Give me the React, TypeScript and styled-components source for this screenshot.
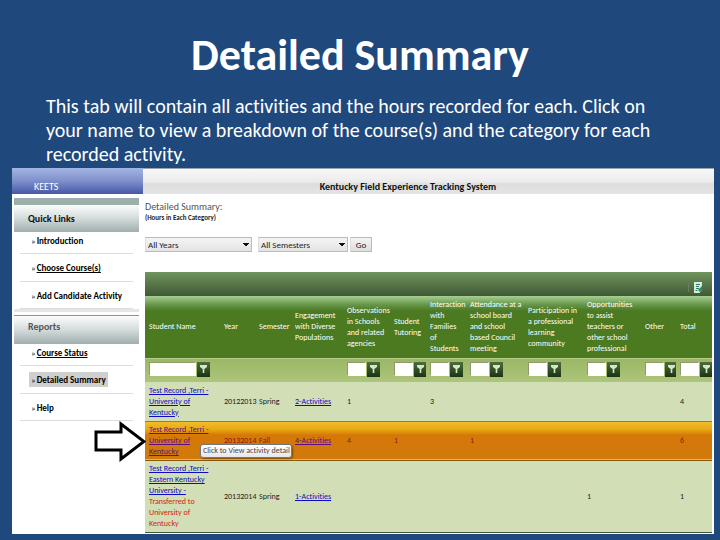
import React from "react";
import styled, { createGlobalStyle, css } from "styled-components";

const GlobalStyle = createGlobalStyle`
  * { box-sizing: border-box; }
  body {
    margin: 0;
    background: #1f497d;
    font-family: Carlito, "Liberation Sans", sans-serif;
    font-variant-ligatures: none;
    font-size: 8px;
    line-height: 11px;
  }
  button, input, select { font: inherit; margin: 0; border-radius: 0; }
`;

const Slide = styled.main`
  padding: 28px 6px 6px 12px;
`;

const Title = styled.h1`
  margin: 0 0 12px;
  padding-right: 6px;
  text-align: center;
  color: #fff;
  font-weight: 700;
  font-size: 44px;
  line-height: 54px;
`;

const Intro = styled.p`
  margin: 0;
  padding: 0 40px 2px 34px;
  color: #fff;
  font-size: 20px;
  line-height: 24px;
`;

const Screen = styled.div`
  display: grid;
  grid-template-columns: 131px 1fr;
  background: #fff;
`;

const Brand = styled.div`
  height: 26px;
  padding: 13px 0 0 22px;
  color: #fff;
  font-size: 10px;
  background: linear-gradient(#a3b5e2, #7f8fcb 50%, #4658a6);
`;

const Banner = styled.header`
  height: 26px;
  padding: 12px 41px 0 0;
  text-align: center;
  font-weight: 700;
  font-size: 10px;
  color: #111;
  border-top: 1px solid #9aa3ad;
  background: linear-gradient(#f8f8f8, #ececec 50%, #dcdedc 60%, #e4e4e4);
`;

const Sidebar = styled.nav`
  padding: 4px 4px 0 2px;
`;

const GroupTitle = styled.h2<{ $muted?: boolean }>`
  margin: 0;
  height: ${(p) => (p.$muted ? 29 : 34)}px;
  padding: ${(p) => (p.$muted ? 5 : 8)}px 0 0 14px;
  border-top: ${(p) => (p.$muted ? "1px solid #8b9392" : "7px solid #9bafad")};
  border-bottom: 1px solid #a5b1b0;
  background: linear-gradient(#fcfdfd, #d5dcdc 50%, #a3b2b1);
  color: ${(p) => (p.$muted ? "#555" : "#111")};
  font-size: 10px;
  line-height: 12px;
`;

const Links = styled.ul<{ $last?: boolean }>`
  list-style: none;
  margin: 0;
  padding: 0 6px;
  ${(p) => !p.$last && css`
    border-bottom: 3px solid #e6e6e6;
    margin-bottom: 3px;
  `}
`;

const LinkItem = styled.li`
  display: flex;
  align-items: center;
  height: 28px;
  padding-left: 9px;
  border-bottom: 1px solid #dcdcdc;
  &:first-child { height: 22px; padding-bottom: 4px; }
  &:last-child { height: 27px; }
`;

const NavLink = styled.a<{ $line?: boolean; $active?: boolean }>`
  display: flex;
  gap: 1px;
  padding: 2px;
  color: #000;
  font-weight: 700;
  font-size: 9px;
  white-space: nowrap;
  text-decoration: none;
  background: ${(p) => (p.$active ? "#cfcfcf" : "none")};
  span { text-decoration: ${(p) => (p.$line ? "underline" : "none")}; }
  &::before { content: "»"; font-weight: 400; }
`;

const Content = styled.section`
  min-width: 0;
  padding: 7px 2px 1px;
`;

const Heading = styled.h2`
  margin: 0;
  color: #555;
  font-weight: 400;
  font-size: 10px;
  line-height: 12px;
`;

const SubHeading = styled.p`
  margin: 0 0 15px;
  font-weight: 700;
  font-size: 7px;
  line-height: 9px;
  color: #222;
`;

const Filters = styled.form`
  display: flex;
  gap: 6px;
  height: 15px;
  margin-bottom: 20px;
`;

const control = css`
  border: 1px solid #bbb;
  border-left-color: #ddd;
  color: #222;
  padding: 0 0 0 2px;
  font-size: 9px;
`;

const Select = styled.select<{ $w: number }>`
  ${control}
  width: ${(p) => p.$w}px;
  appearance: none;
  background: linear-gradient(#111, #111) right 2px top 5px / 6px 1px no-repeat,
    linear-gradient(#111, #111) right 3px top 6px / 4px 1px no-repeat,
    linear-gradient(#111, #111) right 4px top 7px / 2px 1px no-repeat,
    linear-gradient(#f4f4f4, #e4e4e4);
`;

const GoButton = styled.button`
  ${control}
  width: 22px;
  padding: 0;
  margin-left: -4px;
  background: linear-gradient(#f4f4f4, #dedede);
`;

const Toolbar = styled.div`
  display: flex;
  justify-content: flex-end;
  align-items: center;
  gap: 5px;
  height: 24px;
  padding: 6px 10px 0 0;
  background: linear-gradient(#6f955d, #3f5935);
  &::before { content: ""; width: 1px; height: 9px; background: #6b7f60; }
`;

const ExportButton = styled.button`
  display: flex;
  padding: 0;
  border: 0;
  background: none;
`;

const Grid = styled.table`
  width: 100%;
  table-layout: fixed;
  border-collapse: collapse;
  border-bottom: 1px solid #46583c;
`;

const HeadRow = styled.tr`
  height: 62px;
  color: #fff;
  background: linear-gradient(#a6cf92, #66964a 14%, #4b7a22 24%, #4b7a20);
`;

const HeadCell = styled.th`
  padding: 0 0 0 4px;
  text-align: left;
  font-weight: 400;
  white-space: pre;
`;

const FilterRow = styled.tr`
  height: 24px;
  background: linear-gradient(#9bb765, #adc57c);
  border-top: 1px solid #b9cd8c;
`;

const FilterCell = styled.td`
  padding: 0 0 0 4px;
  overflow: hidden;
`;

const FilterBox = styled.div`
  display: flex;
  gap: 1px;
  margin-top: -2px;
`;

const FilterInput = styled.input<{ $wide?: boolean }>`
  flex: none;
  width: ${(p) => (p.$wide ? 47 : 19)}px;
  height: 14px;
  padding: 0 2px;
  border: 1px solid #8d9b6a;
  border-right-color: #fff;
  border-bottom-color: #fff;
  background: #fff;
`;

const FilterButton = styled.button`
  flex: none;
  display: flex;
  align-items: center;
  justify-content: center;
  width: 13px;
  height: 15px;
  padding: 0;
  border: 0;
  background: linear-gradient(#4c7038, #1c3313);
`;

const Row = styled.tr<{ $hot?: boolean; $tall?: boolean }>`
  height: ${(p) => (p.$tall ? 72 : 39)}px;
  color: ${(p) => (p.$hot ? "#8a1a08" : "#222")};
  background: ${(p) =>
    p.$hot
      ? "linear-gradient(#f0bd2b, #e8a813 20%, #d57808 36%, #d07a0b)"
      : "#d2dfb6"};
  ${(p) => p.$hot && css`
    border-top: 1px solid #a07d1c;
    border-bottom: 1px solid #8a5a0c;
  `}
`;

const Cell = styled.td`
  position: relative;
  padding: 0 0 0 4px;
  white-space: pre;
`;

const RecordLink = styled.a<{ $hot?: boolean }>`
  color: ${(p) => (p.$hot ? "#5b0f80" : "#0c0cc4")};
`;

const Transfer = styled.span`
  display: block;
  color: #d01c10;
`;

const Tooltip = styled.div`
  position: absolute;
  z-index: 1;
  left: 55px;
  top: 22px;
  padding: 0 1px 1px 2px;
  border: 1px solid #777;
  border-radius: 3px;
  background: linear-gradient(#fff, #e6e6ee);
  box-shadow: 1px 1px 2px #0006;
  color: #444;
`;

const Pointer = styled.svg`
  position: absolute;
  left: -51px;
  top: -1px;
`;

const Funnel = () => (
  <svg width="7" height="8" viewBox="0 0 7 8" aria-hidden="true">
    <path d="M0 0h7v2L4.300 4v4H2.700V4L0 2z" fill="#d5e6cc" />
  </svg>
);

const columns: [string, number][] = [
  ["Student Name", 75],
  ["Year", 35],
  ["Semester", 36],
  ["Engagement\nwith Diverse\nPopulations", 52],
  ["Observations\nin Schools\nand related\nagencies", 47],
  ["Student\nTutoring", 36],
  ["Interaction\nwith\nFamilies\nof\nStudents", 40],
  ["Attendance at a\nschool board\nand school\nbased Council\nmeeting", 58],
  ["Participation in\na professional\nlearning\ncommunity", 59],
  ["Opportunities\nto assist\nteachers or\nother school\nprofessional", 58],
  ["Other", 35],
  ["Total", 36],
];

const records = [
  {
    name: "Test Record ,Terri -\nUniversity of\nKentucky",
    year: "20122013", term: "Spring", link: "2-Activities",
    hours: ["1", "", "3", "", "", "", "", "4"],
  },
  {
    name: "Test Record ,Terri -\nUniversity of\nKentucky",
    year: "20132014", term: "Fall", link: "4-Activities", hot: true,
    hours: ["4", "1", "", "1", "", "", "", "6"],
  },
  {
    name: "Test Record ,Terri -\nEastern Kentucky\nUniversity -",
    transfer: "Transferred to\nUniversity of\nKentucky",
    year: "20132014", term: "Spring", link: "1-Activities",
    hours: ["", "", "", "", "", "1", "", "1"],
  },
];

export default function App() {
  return (
    <Slide>
      <GlobalStyle />
      <Title>Detailed Summary</Title>
      <Intro>
        This tab will contain all activities and the hours recorded for each. Click on
        your name to view a breakdown of the course(s) and the category for each
        recorded activity.
      </Intro>
      <Screen>
        <Brand>KEETS</Brand>
        <Banner>Kentucky Field Experience Tracking System</Banner>
        <Sidebar>
          <GroupTitle>Quick Links</GroupTitle>
          <Links>
            <LinkItem><NavLink href="#intro"><span>Introduction</span></NavLink></LinkItem>
            <LinkItem><NavLink href="#choose" $line><span>Choose Course(s)</span></NavLink></LinkItem>
            <LinkItem><NavLink href="#add"><span>Add Candidate Activity</span></NavLink></LinkItem>
          </Links>
          <GroupTitle $muted>Reports</GroupTitle>
          <Links $last>
            <LinkItem><NavLink href="#status" $line><span>Course Status</span></NavLink></LinkItem>
            <LinkItem><NavLink href="#summary" $active><span>Detailed Summary</span></NavLink></LinkItem>
            <LinkItem><NavLink href="#help"><span>Help</span></NavLink></LinkItem>
          </Links>
        </Sidebar>
        <Content>
          <Heading>Detailed Summary:</Heading>
          <SubHeading>(Hours in Each Category)</SubHeading>
          <Filters onSubmit={(e) => e.preventDefault()}>
            <Select $w={107} aria-label="Year"><option>All Years</option></Select>
            <Select $w={90} aria-label="Semester"><option>All Semesters</option></Select>
            <GoButton>Go</GoButton>
          </Filters>
          <Toolbar>
            <ExportButton aria-label="Export">
              <svg width="8" height="11" viewBox="0 0 8 11">
                <path d="M0 0h8v8L5.500 11H0z" fill="#d6ece0" />
                <path d="M2 2.500h4M2 4.500h3M2 6.500h3M1.500 8.500h2" stroke="#2f7a6a" />
                <path d="M4 8l4-4v4l-2 2z" fill="#2e8a55" />
              </svg>
            </ExportButton>
          </Toolbar>
          <Grid>
            <colgroup>
              {columns.map(([label, w]) => <col key={label} width={w} />)}
            </colgroup>
            <thead>
              <HeadRow>
                {columns.map(([label]) => <HeadCell key={label} scope="col">{label}</HeadCell>)}
              </HeadRow>
              <FilterRow>
                {columns.map(([label], i) => (
                  <FilterCell key={label}>
                    {(i === 0 || i > 3) && (
                      <FilterBox>
                        <FilterInput $wide={i === 0} aria-label={`Filter ${label}`} />
                        <FilterButton aria-label={`Apply filter ${label}`}><Funnel /></FilterButton>
                      </FilterBox>
                    )}
                  </FilterCell>
                ))}
              </FilterRow>
            </thead>
            <tbody>
              {records.map((r, n) => (
                <Row key={n} $hot={r.hot} $tall={!!r.transfer}>
                  <Cell>
                    <RecordLink href="#record" $hot={r.hot}>{r.name}</RecordLink>
                    {r.transfer && <Transfer>{r.transfer}</Transfer>}
                    {r.hot && (
                      <>
                        <Pointer width="52" height="41" viewBox="0 0 52 41" aria-hidden="true">
                          <path d="M2 11h25V3l23 17.500L27 38V29H2z" fill="#fff" stroke="#000" strokeWidth="3" />
                        </Pointer>
                        <Tooltip role="tooltip">Click to View activity detail</Tooltip>
                      </>
                    )}
                  </Cell>
                  <Cell>{r.year}</Cell>
                  <Cell>{r.term}</Cell>
                  <Cell><RecordLink href="#activities" $hot={r.hot}>{r.link}</RecordLink></Cell>
                  {r.hours.map((h, i) => <Cell key={i}>{h}</Cell>)}
                </Row>
              ))}
            </tbody>
          </Grid>
        </Content>
      </Screen>
    </Slide>
  );
}
